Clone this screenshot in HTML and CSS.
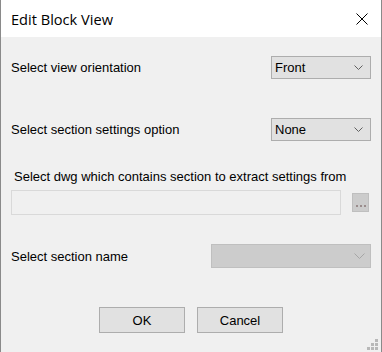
FILE: index.html
```html
<!DOCTYPE html>
<html lang="en">
<head>
  <meta charset="UTF-8" />
  <title>Edit Block View</title>
  <link rel="stylesheet" href="styles.css">
</head>
<body>
  <div class="dialog">
    <!-- Title bar -->
    <div class="titlebar">
      <span class="title">Edit Block View</span>
      <svg class="close" width="12" height="12" viewBox="0 0 12 12">
        <path d="M0.5 0.5 L11.5 11.5 M11.5 0.5 L0.5 11.5" stroke="#000" stroke-width="1" fill="none" />
      </svg>
    </div>

    <div class="content">
      <div class="row row-first">
        <label>Select view orientation</label>
        <div class="combo">
          <span>Front</span>
          <svg class="chev" width="9" height="5" viewBox="0 0 9 5"><path d="M0.5 0.5 L4.5 4.5 L8.5 0.5" stroke="#606060" fill="none" /></svg>
        </div>
      </div>

      <div class="row row-second">
        <label>Select section settings option</label>
        <div class="combo">
          <span>None</span>
          <svg class="chev" width="9" height="5" viewBox="0 0 9 5"><path d="M0.5 0.5 L4.5 4.5 L8.5 0.5" stroke="#606060" fill="none" /></svg>
        </div>
      </div>

      <div class="dwg-label">Select dwg which contains section to extract settings from</div>
      <div class="dwg-row">
        <div class="textbox"></div>
        <div class="browse"><span></span><span></span><span></span></div>
      </div>

      <div class="row row-name">
        <label>Select section name</label>
        <div class="combo combo-disabled">
          <svg class="chev" width="11" height="6" viewBox="0 0 11 6"><path d="M0.5 0.5 L5.5 5.5 L10.5 0.5" stroke="#a6a6a6" fill="none" /></svg>
        </div>
      </div>

      <div class="buttons">
        <button>OK</button>
        <button>Cancel</button>
      </div>
    </div>

    <div class="grip">
      <i style="grid-area: 1 / 3"></i>
      <i style="grid-area: 2 / 2"></i><i style="grid-area: 2 / 3"></i>
      <i style="grid-area: 3 / 1"></i><i style="grid-area: 3 / 2"></i><i style="grid-area: 3 / 3"></i>
    </div>
  </div>
</body>
</html>
```

FILE: styles.css
```css
* {
  box-sizing: border-box;
}
body {
  margin: 0;
  font-family: 'Liberation Sans', Arial, sans-serif;
}
.dialog {
  position: relative;
  width: 382px;
  height: 352px;
  background: #f0f0f0;
  border-left: 1px solid #8a8a8a;
  border-right: 1px solid #8a8a8a;
  overflow: hidden;
}
.titlebar {
  height: 37px;
  background: #fff;
  display: flex;
  align-items: center;
  justify-content: space-between;
  padding: 0 13px 0 10px;
}
.title {
  font-family: 'Open Sans', 'Noto Sans', sans-serif;
  font-size: 14.6px;
  color: #000;
}
.content {
  padding: 19px 10px 0 10px;
  font-size: 13px;
  color: #000;
}
.row {
  display: flex;
  align-items: center;
  justify-content: space-between;
}
.row-second {
  margin-top: 39px;
}
.combo {
  width: 100px;
  height: 23px;
  background: #e1e1e1;
  border: 1px solid #adadad;
  display: flex;
  align-items: center;
  justify-content: space-between;
  padding: 0 7px 0 3px;
}
.combo-disabled {
  width: 160px;
  height: 24px;
  background: #cccccc;
  border-color: #bfbfbf;
  justify-content: flex-end;
  padding-right: 5px;
}
.chev {
  display: block;
}
.dwg-label {
  margin-top: 28px;
  padding-left: 3px;
  line-height: 16px;
}
.dwg-row {
  margin-top: 5px;
  display: flex;
  align-items: center;
  gap: 11px;
}
.textbox {
  width: 330px;
  height: 25px;
  border: 1px solid #d9d9d9;
  background: #f0f0f0;
}
.browse {
  width: 17px;
  height: 19px;
  background: #cccccc;
  border: 1px solid #bfbfbf;
  display: flex;
  align-items: flex-end;
  justify-content: center;
  gap: 2px;
  padding-bottom: 4px;
}
.browse span {
  width: 2px;
  height: 2px;
  background: #9a8c8c;
}
.row-name {
  margin-top: 29px;
}
.buttons {
  margin-top: 39px;
  display: flex;
  justify-content: center;
  gap: 12px;
}
button {
  width: 86px;
  height: 26px;
  background: #e1e1e1;
  border: 1px solid #adadad;
  font-family: 'Liberation Sans', Arial, sans-serif;
  font-size: 13px;
  color: #000;
  padding: 0;
}
.grip {
  position: absolute;
  right: 3px;
  bottom: 2px;
  display: grid;
  grid-template-columns: repeat(3, 3px);
  grid-template-rows: repeat(3, 3px);
  gap: 1px;
}
.grip i {
  background: #b8b8b8;
}
```
